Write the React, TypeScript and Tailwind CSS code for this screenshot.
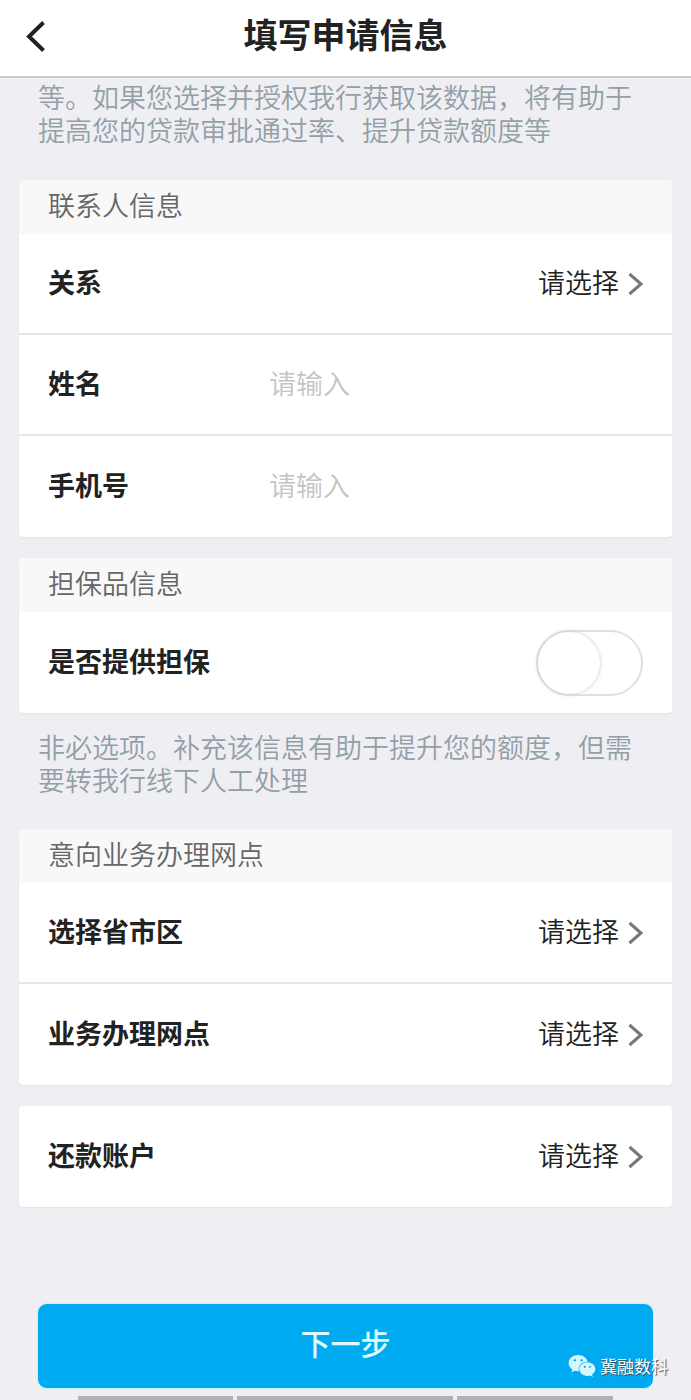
import type { ReactNode } from "react";
import { FaWeixin } from "react-icons/fa";

export default function App() {
  return (
    <div className="relative min-h-screen bg-[#eeeef3] font-['Noto_Sans_CJK_SC',sans-serif] text-[27px] leading-[33px] text-[#222222]">
      <header className="grid h-[78px] grid-cols-[72px_1fr_72px] items-center border-b-2 border-[#cbcbcd] bg-white">
        <button type="button" aria-label="返回" className="flex h-full items-center pb-1 pl-6">
          <svg viewBox="0 0 24 36" className="h-9 w-6" fill="none" stroke="#222222" strokeWidth="4">
            <path d="M19.5 4.5 5 18.5l14.5 14" />
          </svg>
        </button>
        <h1 className="pb-2 text-center text-[34px] leading-[40px] font-bold">填写申请信息</h1>
      </header>

      <form className="px-[19px]">
        <Hint className="pt-[2px]">
          等。如果您选择并授权我行获取该数据，将有助于提高您的贷款审批通过率、提升贷款额度等
        </Hint>

        <Card title="联系人信息" className="mt-[34px]">
          <SelectRow id="relation" label="关系" />
          <InputRow id="name" label="姓名" />
          <InputRow id="phone" label="手机号" type="tel" />
        </Card>

        <Card title="担保品信息" className="mt-[21px]">
          <SwitchRow id="guarantee" label="是否提供担保" />
        </Card>

        <Hint className="mt-[17px]">
          非必选项。补充该信息有助于提升您的额度，但需要转我行线下人工处理
        </Hint>

        <Card title="意向业务办理网点" className="mt-[33px]">
          <SelectRow id="region" label="选择省市区" />
          <SelectRow id="branch" label="业务办理网点" />
        </Card>

        <Card className="mt-[21px]">
          <SelectRow id="account" label="还款账户" />
        </Card>

        <div className="mt-24 px-[18px]">
          <button
            type="submit"
            className="h-[86px] w-full rounded-[10px] border border-[#c9f0fb] bg-[#00aaf0] pb-2 text-[30px] font-medium text-[#dcfdff]"
          >
            下一步
          </button>
        </div>
      </form>

      <div className="mt-[7px] grid h-1 grid-cols-[155fr_215fr_156fr] gap-1 px-[78px]">
        <div className="bg-[#b2b1b6]" />
        <div className="bg-[#b2b1b6]" />
        <div className="bg-[#b2b1b6]" />
      </div>

      <div className="pointer-events-none absolute right-[23px] bottom-5 flex items-center gap-1 text-[17px] leading-6 text-white [text-shadow:1px_1px_1px_#444444]">
        <FaWeixin className="size-7 text-[#d5f8ff]" />
        <span>冀融数科</span>
      </div>
    </div>
  );
}

function Hint({ children, className }: { children: ReactNode; className?: string }) {
  return <p className={`px-[19px] font-[350] text-[#939fa7] ${className}`}>{children}</p>;
}

function Card({ title, children, className }: { title?: string; children: ReactNode; className?: string }) {
  return (
    <section className={`overflow-hidden rounded-sm bg-white shadow-xs ${className}`}>
      {title && (
        <h2 className="h-[54px] bg-[#f8f8f9] px-[29px] pt-2 font-[350] text-[#666666]">{title}</h2>
      )}
      <div className="divide-y-2 divide-[#e6e6e8]">{children}</div>
    </section>
  );
}

function Row({ id, label, children }: { id: string; label: string; children: ReactNode }) {
  return (
    <div className="flex h-[101px] items-center px-[29px]">
      <label htmlFor={id} className="w-[221px] shrink-0 pb-1 font-bold">
        {label}
      </label>
      {children}
    </div>
  );
}

function SelectRow({ id, label }: { id: string; label: string }) {
  return (
    <Row id={id} label={label}>
      <select id={id} className="min-w-0 flex-1 appearance-none bg-transparent pb-1 text-right font-[350] [text-align-last:right]">
        <option>请选择</option>
      </select>
      <svg viewBox="0 0 16 24" className="ml-2 h-6 w-4" fill="none" stroke="#777777" strokeWidth="3">
        <path d="M2.5 2 14 12 2.5 22" />
      </svg>
    </Row>
  );
}

function InputRow({ id, label, type = "text" }: { id: string; label: string; type?: string }) {
  return (
    <Row id={id} label={label}>
      <input
        id={id}
        type={type}
        placeholder="请输入"
        className="min-w-0 flex-1 pb-1 font-[350] outline-none placeholder:text-[#c4c4c4]"
      />
    </Row>
  );
}

function SwitchRow({ id, label }: { id: string; label: string }) {
  return (
    <Row id={id} label={label}>
      <input
        id={id}
        type="checkbox"
        role="switch"
        className="ml-auto h-[66px] w-[107px] appearance-none rounded-full border-2 border-[#e0e0e0] bg-white before:block before:size-[62px] before:rounded-full before:bg-white before:shadow-[0_0_4px_#c8c8c8] checked:bg-[#00aaf0] checked:before:ml-auto"
      />
    </Row>
  );
}
